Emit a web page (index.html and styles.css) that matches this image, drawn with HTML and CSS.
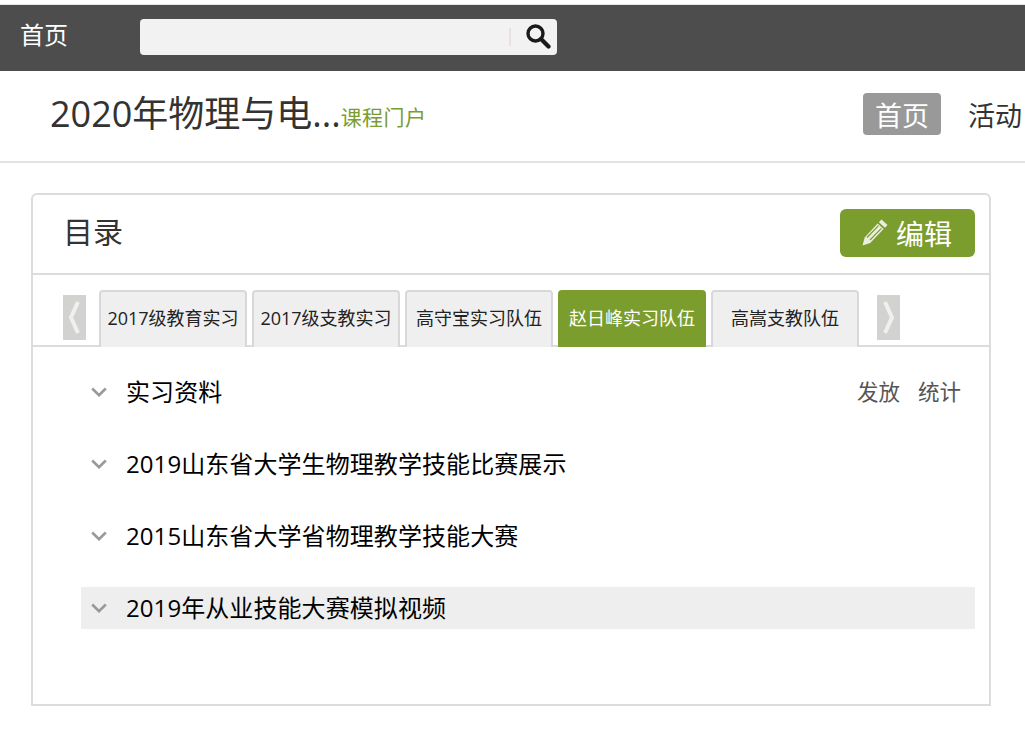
FILE: index.html
```html
<!DOCTYPE html>
<html lang="zh-CN">
<head>
<meta charset="utf-8">
<title>课程门户</title>
<link rel="stylesheet" href="styles.css">
</head>
<body>
<div class="top-strip"></div>
<header class="topbar">
  <a class="home-link">首页</a>
  <div class="search">
    <span class="search-sep"></span>
    <svg class="search-icon" viewBox="0 0 26 26" width="26" height="26"><circle cx="10.500" cy="10.500" r="7.500" fill="none" stroke="#1a1a1a" stroke-width="3.400"/><path d="M16 16l7.500 7.500" stroke="#1a1a1a" stroke-width="4.200" stroke-linecap="round"/></svg>
  </div>
</header>
<div class="course-bar">
  <div class="course-title"><span class="course-name">2020年物理与电...</span><span class="course-sub">课程门户</span></div>
  <nav class="course-nav"><a class="nav-item nav-active">首页</a><a class="nav-item">活动</a></nav>
</div>
<main class="card">
  <div class="card-head">
    <h2 class="card-title">目录</h2>
    <a class="edit-btn">
      <svg class="edit-icon" viewBox="0 0 28 28" width="28" height="28"><path d="M20.500 1.500l6 5.500-2.600 2.800-6-5.600z" fill="#e9eede"/><path d="M16.600 5.400l6 5.600L9.200 25l-7.700 2.400L3.700 19.500z" fill="#e9eede"/><path d="M6 19.500l11.500-11.800M9 22L20.400 10.300" stroke="#7b9d2e" stroke-width="1.200"/></svg>
      <span>编辑</span>
    </a>
  </div>
  <div class="tabs">
    <span class="tab-arrow tab-arrow-left"><svg viewBox="0 0 23 45" width="23" height="45"><path d="M15 7L8 22.500 15 38" fill="none" stroke="#f0f0ee" stroke-width="4"/></svg></span>
    <a class="tab">2017级教育实习</a>
    <a class="tab">2017级支教实习</a>
    <a class="tab">高守宝实习队伍</a>
    <a class="tab tab-active">赵日峰实习队伍</a>
    <a class="tab">高嵩支教队伍</a>
    <span class="tab-arrow tab-arrow-right"><svg viewBox="0 0 23 45" width="23" height="45"><path d="M8 7l7 15.500L8 38" fill="none" stroke="#f0f0ee" stroke-width="4"/></svg></span>
  </div>
  <ul class="rows">
    <li class="row">
      <svg class="chev" viewBox="0 0 16 10" width="16" height="10"><path d="M1.200 1.500L8 8.200l6.800-6.700" fill="none" stroke="#999" stroke-width="2.600"/></svg>
      <span class="row-text">实习资料</span>
      <span class="row-actions"><a>发放</a><a>统计</a></span>
    </li>
    <li class="row">
      <svg class="chev" viewBox="0 0 16 10" width="16" height="10"><path d="M1.200 1.500L8 8.200l6.800-6.700" fill="none" stroke="#999" stroke-width="2.600"/></svg>
      <span class="row-text">2019山东省大学生物理教学技能比赛展示</span>
    </li>
    <li class="row">
      <svg class="chev" viewBox="0 0 16 10" width="16" height="10"><path d="M1.200 1.500L8 8.200l6.800-6.700" fill="none" stroke="#999" stroke-width="2.600"/></svg>
      <span class="row-text">2015山东省大学省物理教学技能大赛</span>
    </li>
    <li class="row row-hover">
      <svg class="chev" viewBox="0 0 16 10" width="16" height="10"><path d="M1.200 1.500L8 8.200l6.800-6.700" fill="none" stroke="#999" stroke-width="2.600"/></svg>
      <span class="row-text">2019年从业技能大赛模拟视频</span>
    </li>
  </ul>
</main>
</body>
</html>
```
FILE: styles.css
```css
* { box-sizing: border-box; }
html, body { margin: 0; padding: 0; height: 732px; overflow: hidden; background: #fff; }
body { font-family: "Open Sans", "Noto Sans CJK SC", sans-serif; color: #333; width: 1025px; }
a { color: inherit; text-decoration: none; }
.top-strip { height: 5px; border-bottom: 1px solid #e6e6e6; }
.topbar { height: 66px; background: #4d4d4d; display: flex; align-items: center; padding-left: 20px; }
.home-link { color: #fff; font-size: 24px; width: 120px; line-height: 30px; margin-top: -6px; }
.search { width: 417px; height: 36px; margin-top: -2px; background: #f2f2f2; border-radius: 4px; display: flex; align-items: center; justify-content: flex-end; padding: 0 6px 3px 0; }
.search-sep { width: 2px; height: 18px; background: #e8e0e4; margin: 3px 14px 0 0; }
.search-icon { display: block; }
.course-bar { height: 92px; border-bottom: 2px solid #e2e2e2; display: flex; justify-content: space-between; padding: 22px 0 0 50px; width: 1025px; }
.course-title { display: flex; align-items: baseline; height: 44px; }
.course-name { font-size: 36px; line-height: 42px; color: #333; white-space: nowrap; }
.course-sub { font-size: 21px; letter-spacing: 0.4px; line-height: 18px; color: #7b9d2e; white-space: nowrap; position: relative; top: -2px; }
.course-nav { display: flex; flex: none; width: 162px; }
.nav-item { font-size: 27px; line-height: 46px; height: 42px; color: #333; white-space: nowrap; }
.nav-active { width: 78px; margin-right: 27px; background: #999; color: #fff; border-radius: 4px; text-align: center; }
.card { margin: 30px 0 0 31px; width: 960px; height: 513px; border: 2px solid #dcdcdc; border-top-left-radius: 6px; border-top-right-radius: 6px; display: flex; flex-direction: column; }
.card-head { height: 80px; flex: none; border-bottom: 2px solid #dcdcdc; display: flex; align-items: flex-start; justify-content: space-between; padding: 14px 14px 0 30px; }
.card-title { margin: 0; font-weight: 400; font-size: 30px; line-height: 46px; color: #333; }
.edit-btn { width: 135px; height: 48px; background: #7b9d2e; border-radius: 6px; color: #fff; display: flex; align-items: center; font-size: 28px; padding-left: 21px; gap: 7px; }
.edit-icon { display: block; flex: none; margin-top: -3px; }
.tabs { height: 72px; flex: none; border-bottom: 2px solid #dcdcdc; display: flex; align-items: flex-start; padding: 15px 0 0 30px; }
.tab { width: 148px; height: 57px; margin-right: 5px; background: #efefef; border: 2px solid #d8d8d8; border-bottom: 0; border-radius: 4px 4px 0 0; font-size: 18px; line-height: 52px; text-align: center; color: #222; white-space: nowrap; }
.tab-active { background: #7b9d2e; border-color: #7b9d2e; color: #fff; }
.tab-arrow { width: 23px; height: 45px; background: #d2d2d0; flex: none; margin-top: 5px; display: block; }
.tab-arrow svg { display: block; }
.tab-arrow-left { margin-right: 13px; }
.tab-arrow-right { margin-left: 13px; }
.rows { list-style: none; margin: 0; padding: 24px 14px 0 48px; display: flex; flex-direction: column; gap: 30px; }
.row { height: 42px; display: flex; align-items: center; padding-left: 10px; color: #000; font-size: 24px; line-height: 40px; }
.row-hover { background: #eee; }
.chev { display: block; flex: none; margin-right: 19px; }
.row-text { flex: 1; white-space: nowrap; letter-spacing: 0.08px; }
.row-actions { display: flex; gap: 18px; font-size: 21.500px; color: #555; padding-right: 14px; }
```
